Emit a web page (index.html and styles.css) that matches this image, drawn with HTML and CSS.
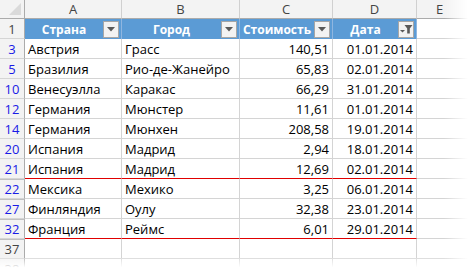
FILE: index.html
```html
<!DOCTYPE html>
<html>
<head>
<meta charset="utf-8">
<link rel="stylesheet" href="styles.css">
</head>
<body>
<div class="sheet">
  <div class="grid">
    <div class="corner"><span class="corner-tri"></span></div>
    <div class="ch">A</div>
    <div class="ch">B</div>
    <div class="ch">C</div>
    <div class="ch">D</div>
    <div class="ch">E</div>

    <div class="rh">1</div>
    <div class="th"><span class="th-label">Страна</span><span class="dd"><svg width="8" height="5" viewBox="0 0 8 5"><path d="M0 0H8L4 4.5Z" fill="#595959"/></svg></span></div>
    <div class="th"><span class="th-label">Город</span><span class="dd"><svg width="8" height="5" viewBox="0 0 8 5"><path d="M0 0H8L4 4.5Z" fill="#595959"/></svg></span></div>
    <div class="th"><span class="th-label">Стоимость</span><span class="dd"><svg width="8" height="5" viewBox="0 0 8 5"><path d="M0 0H8L4 4.5Z" fill="#595959"/></svg></span></div>
    <div class="th"><span class="th-label">Дата</span><span class="dd"><svg width="13" height="10" viewBox="0 0 13 10"><path d="M0 6H5L2.5 8.5Z" fill="#595959"/><path d="M4.5 1H12.5L9.8 4.5V9.5H7.2V4.5Z" fill="#595959"/></svg></span></div>
    <div class="c"></div>

    <div class="rh f">3</div><div class="c">Австрия</div><div class="c">Грасс</div><div class="c n">140,51</div><div class="c n">01.01.2014</div><div class="c"></div>
    <div class="rh f">5</div><div class="c">Бразилия</div><div class="c">Рио-де-Жанейро</div><div class="c n">65,83</div><div class="c n">02.01.2014</div><div class="c"></div>
    <div class="rh f">10</div><div class="c">Венесуэлла</div><div class="c">Каракас</div><div class="c n">66,29</div><div class="c n">31.01.2014</div><div class="c"></div>
    <div class="rh f">12</div><div class="c">Германия</div><div class="c">Мюнстер</div><div class="c n">11,61</div><div class="c n">01.01.2014</div><div class="c"></div>
    <div class="rh f">14</div><div class="c">Германия</div><div class="c">Мюнхен</div><div class="c n">208,58</div><div class="c n">19.01.2014</div><div class="c"></div>
    <div class="rh f">20</div><div class="c">Испания</div><div class="c">Мадрид</div><div class="c n">2,94</div><div class="c n">18.01.2014</div><div class="c"></div>
    <div class="rh f">21</div><div class="c red">Испания</div><div class="c red">Мадрид</div><div class="c n red">12,69</div><div class="c n red">02.01.2014</div><div class="c"></div>
    <div class="rh f hid">22</div><div class="c">Мексика</div><div class="c">Мехико</div><div class="c n">3,25</div><div class="c n">06.01.2014</div><div class="c"></div>
    <div class="rh f hid">27</div><div class="c">Финляндия</div><div class="c">Оулу</div><div class="c n">32,38</div><div class="c n">23.01.2014</div><div class="c"></div>
    <div class="rh f hid">32</div><div class="c red">Франция</div><div class="c red">Реймс</div><div class="c n red">6,01</div><div class="c n red">29.01.2014</div><div class="c"></div>
    <div class="rh hid">37</div><div class="c"></div><div class="c"></div><div class="c"></div><div class="c"></div><div class="c"></div>
    <div class="rh">38</div><div class="c"></div><div class="c"></div><div class="c"></div><div class="c"></div><div class="c"></div>
  </div>
  <div class="fade-right"></div>
  <div class="fade-bottom"></div>
</div>
</body>
</html>
```

FILE: styles.css
```css
* { box-sizing: border-box; }
html, body { margin: 0; padding: 0; background: #fff; }
body { width: 474px; height: 270px; overflow: hidden; }

.sheet {
  position: relative;
  width: 474px;
  height: 270px;
  overflow: hidden;
  font-family: "Open Sans", "Noto Sans", "Liberation Sans", sans-serif;
  font-size: 13px;
  color: #000;
}

.grid {
  display: grid;
  grid-template-columns: 25px 97px 118px 93px 84px 57px;
  grid-template-rows: 19px repeat(13, 20px);
}

.corner {
  background: #f3f3f3;
  border-right: 1px solid #ababab;
  border-bottom: 1px solid #ababab;
  position: relative;
}
.corner-tri {
  position: absolute;
  right: 3px;
  bottom: 3px;
  width: 0;
  height: 0;
  border-left: 12px solid transparent;
  border-bottom: 12px solid #dadada;
}

.ch {
  background: #f3f3f3;
  border-right: 1px solid #d0d0d0;
  border-bottom: 1px solid #ababab;
  color: #444;
  display: flex;
  align-items: center;
  justify-content: center;
  font-size: 13px;
}
.ch:nth-child(6) { justify-content: flex-start; padding-left: 19px; border-right: none; }

.rh {
  background: #f3f3f3;
  border-right: 1px solid #ababab;
  border-bottom: 1px solid #d5d5d5;
  color: #444;
  display: flex;
  align-items: center;
  justify-content: center;
  font-size: 13px;
}
.rh.f { color: #1a1ae6; }
.rh.hid { border-top: 1px solid #c0c0c0; }

.th {
  background: #5b9bd5;
  border-right: 1px solid #8fb6e0;
  color: #fff;
  font-weight: bold;
  font-size: 12px;
  display: flex;
  align-items: center;
  padding-right: 2px;
}
.th-label { flex: 1; text-align: center; }
.dd {
  width: 16px;
  height: 17px;
  background: #f2f2f2;
  border: 1px solid #a6a6a6;
  display: flex;
  align-items: center;
  justify-content: center;
  flex: none;
}

.c {
  border-right: 1px solid #d4d4d4;
  border-bottom: 1px solid #d4d4d4;
  display: flex;
  align-items: center;
  padding: 0 3px;
  white-space: nowrap;
  overflow: hidden;
}
.c.n { justify-content: flex-end; }
.c.red { border-bottom: 1px solid #e00000; }

.fade-right {
  position: absolute;
  top: 0;
  right: 0;
  width: 30px;
  height: 270px;
  background: linear-gradient(to right, rgba(255,255,255,0), #fff 80%);
}
.fade-bottom {
  position: absolute;
  left: 0;
  bottom: 0;
  width: 474px;
  height: 12px;
  background: linear-gradient(to bottom, rgba(255,255,255,0.2), #fff 80%);
}
```
